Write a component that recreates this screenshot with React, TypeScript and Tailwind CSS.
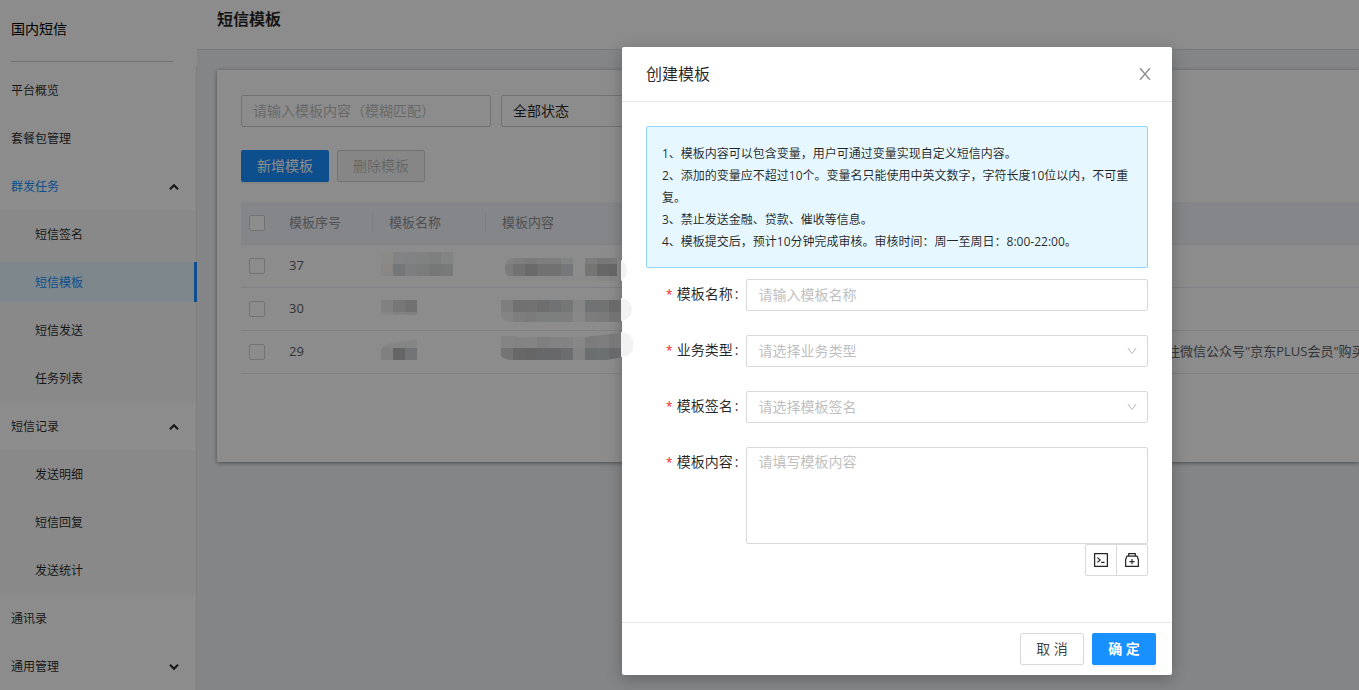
import { AiOutlineCode, AiOutlineDown, AiOutlineMedicineBox } from 'react-icons/ai'
import clsx from 'clsx'

type MenuEntry = {
  label: string
  active?: boolean
  open?: boolean
  arrow?: boolean
  children?: string[]
}

const menu: MenuEntry[] = [
  { label: '平台概览' },
  { label: '套餐包管理' },
  {
    label: '群发任务',
    active: true,
    open: true,
    arrow: true,
    children: ['短信签名', '短信模板', '短信发送', '任务列表'],
  },
  { label: '短信记录', open: true, arrow: true, children: ['发送明细', '短信回复', '发送统计'] },
  { label: '通讯录' },
  { label: '通用管理', arrow: true },
]

const rows = [
  { id: '37', note: '' },
  { id: '30', note: '' },
  { id: '29', note: '注微信公众号"京东PLUS会员"购买' },
]

const tips = [
  '1、模板内容可以包含变量，用户可通过变量实现自定义短信内容。',
  '2、添加的变量应不超过10个。变量名只能使用中英文数字，字符长度10位以内，不可重复。',
  '3、禁止发送金融、贷款、催收等信息。',
  '4、模板提交后，预计10分钟完成审核。审核时间：周一至周日：8:00-22:00。',
]

function MenuArrow({ open }: { open?: boolean }) {
  return (
    <svg
      className={clsx('h-[10px] w-[10px]', !open && 'rotate-180')}
      viewBox="0 0 10 10"
      fill="none"
      stroke="#262626"
      strokeWidth="2"
      aria-hidden="true"
    >
      <path d="M1 7.2 5 3.2 9 7.2" />
    </svg>
  )
}

function CloseIcon() {
  return (
    <svg className="h-4 w-4" viewBox="64 64 896 896" fill="currentColor" aria-hidden="true">
      <path d="M563.8 512l262.5-312.9c4.4-5.2.7-13.1-6.1-13.1h-79.8c-4.7 0-9.2 2.1-12.3 5.7L511.6 449.8 295.1 191.7c-3-3.6-7.5-5.7-12.3-5.7H203c-6.8 0-10.5 7.9-6.1 13.1L459.4 512 196.9 824.9A7.95 7.95 0 0 0 203 838h79.8c4.7 0 9.2-2.1 12.3-5.7l216.5-258.1 216.5 258.1c3 3.6 7.5 5.7 12.3 5.7h79.8c6.8 0 10.5-7.9 6.1-13.1L563.8 512z" />
    </svg>
  )
}

function Sidebar() {
  return (
    <aside className="flex w-[197px] shrink-0 flex-col bg-white shadow-[2px_0_6px_rgba(0,21,41,0.1)]">
      <h2 className="mr-6 ml-[11px] border-b border-[#d0d0d0] pt-[18px] pb-[21px] text-sm leading-[22px] text-black">
        国内短信
      </h2>
      <nav className="mt-1 border-r border-[#e8e8e8] text-xs text-black/85">
        {menu.map((entry) => (
          <div key={entry.label}>
            <a
              href="#"
              className={clsx(
                'flex h-12 items-center justify-between pt-0.5 pr-[17px] pl-[11px]',
                entry.active && 'text-[#1890ff]',
              )}
            >
              {entry.label}
              {entry.arrow && <MenuArrow open={entry.open} />}
            </a>
            {entry.children && (
              <div className="bg-[#fafafa]">
                {entry.children.map((child) => (
                  <div key={child} className="-mr-px py-1">
                    <a
                      href="#"
                      className={clsx(
                        'flex h-10 items-center pt-0.5 pl-[35px]',
                        child === '短信模板' && 'border-r-3 border-[#1890ff] bg-[#e6f7ff] text-[#1890ff]',
                      )}
                    >
                      {child}
                    </a>
                  </div>
                ))}
              </div>
            )}
          </div>
        ))}
      </nav>
    </aside>
  )
}

function Tick({ label }: { label: string }) {
  return (
    <input
      type="checkbox"
      aria-label={label}
      className="block h-4 w-4 appearance-none rounded-xs border border-[#d0d0d0] bg-white"
    />
  )
}

function TemplateTable() {
  return (
    <table className="mt-5 w-full table-fixed border-collapse text-left text-[13px] whitespace-nowrap">
      <colgroup>
        <col className="w-8" />
        <col className="w-[100px]" />
        <col className="w-[113px]" />
        <col className="w-[667px]" />
        <col />
      </colgroup>
      <thead>
        <tr className="h-[42px] border-b border-[#e8ebf2] bg-[#f2f5fa] text-[#909399]">
          <th className="pl-2">
            <Tick label="全选" />
          </th>
          {['模板序号', '模板名称', '模板内容'].map((title, i) => (
            <th key={title} className="p-0 font-normal">
              <div className={clsx('px-4 leading-[21px]', i < 2 && 'border-r border-[#e4e7ed]')}>{title}</div>
            </th>
          ))}
          <th />
        </tr>
      </thead>
      <tbody className="text-[#606266]">
        {rows.map((row) => (
          <tr key={row.id} className="h-[43px] border-b border-[#e8ebf0]">
            <td className="pl-2">
              <Tick label={row.id} />
            </td>
            <td className="px-4">{row.id}</td>
            <td />
            <td />
            <td className="overflow-hidden pl-[14px]">{row.note}</td>
          </tr>
        ))}
      </tbody>
    </table>
  )
}

function TemplatePage() {
  return (
    <main className="flex min-w-0 flex-1 flex-col bg-[#f0f2f5]">
      <header className="border-b border-[#d9dce2] bg-white px-5 pt-[7px] pb-[18px]">
        <h1 className="text-base leading-6 font-bold text-black/85">短信模板</h1>
      </header>
      <section className="mt-5 ml-5 bg-white pt-[25px] pb-[88px] pl-6 shadow-[0_1px_4px_rgba(0,0,0,0.45)]">
        <div className="flex gap-[10px]">
          <input
            aria-label="模板内容"
            placeholder="请输入模板内容（模糊匹配）"
            className="h-8 w-[250px] rounded-xs border border-[#d0d0d0] px-[11px] pb-0.5 text-sm placeholder:text-[#bfbfbf]"
          />
          <select
            aria-label="状态"
            className="h-8 w-[250px] appearance-none rounded-xs border border-[#d0d0d0] px-[11px] text-sm text-black/85"
          >
            <option>全部状态</option>
          </select>
        </div>
        <div className="mt-[23px] flex gap-2 text-sm">
          <button className="h-8 rounded-xs bg-[#1890ff] px-4 text-white shadow-[0_2px_0_rgba(0,0,0,0.045)]">
            新增模板
          </button>
          <button disabled className="h-8 rounded-xs border border-[#d0d0d0] bg-[#f5f5f5] px-[15px] text-black/25">
            删除模板
          </button>
        </div>
        <TemplateTable />
      </section>
    </main>
  )
}

const fieldClass = 'w-full rounded-xs border border-[#d9d9d9] bg-white px-[11px] text-sm placeholder:text-[#bfbfbf]'

function Field({ id, label, children }: { id: string; label: string; children: React.ReactNode }) {
  return (
    <div className="flex">
      <label htmlFor={id} className="w-1/5 shrink-0 pr-2 text-right text-sm leading-[30px] text-black/85">
        <span className="mr-1 text-xs text-[#f5222d]">*</span>
        {label}
        <span className="ml-0.5">:</span>
      </label>
      <div className="min-w-0 flex-1">{children}</div>
    </div>
  )
}

function SelectField({ id, placeholder }: { id: string; placeholder: string }) {
  return (
    <div className="relative">
      <select id={id} defaultValue="" className={clsx(fieldClass, 'h-8 appearance-none text-[#bfbfbf]')}>
        <option value="">{placeholder}</option>
      </select>
      <AiOutlineDown className="pointer-events-none absolute top-[10px] right-[10px] h-3 w-3 text-[#bfbfbf]" />
    </div>
  )
}

function CreateDialog() {
  return (
    <div
      role="dialog"
      aria-labelledby="dialog-title"
      className="w-[550px] rounded-xs bg-white shadow-[0_4px_16px_rgba(0,0,0,0.25)]"
    >
      <div className="flex items-center justify-between border-b border-[#e8e8e8] py-4 pr-[19px] pl-6">
        <h2 id="dialog-title" className="text-base leading-[22px] text-black/85">
          创建模板
        </h2>
        <button aria-label="关闭" className="text-black/45">
          <CloseIcon />
        </button>
      </div>
      <div className="px-6 pt-6 pb-[46px]">
        <div className="rounded-xs border border-[#91d5ff] bg-[#e6f7ff] px-[15px] pt-4 pb-[14px] text-xs leading-[22px] text-black/85">
          {tips.map((tip) => (
            <p key={tip}>{tip}</p>
          ))}
        </div>
        <form className="mt-[11px] flex flex-col gap-6">
          <Field id="name" label="模板名称">
            <input id="name" placeholder="请输入模板名称" className={clsx(fieldClass, 'h-8 pb-0.5')} />
          </Field>
          <Field id="biz" label="业务类型">
            <SelectField id="biz" placeholder="请选择业务类型" />
          </Field>
          <Field id="sign" label="模板签名">
            <SelectField id="sign" placeholder="请选择模板签名" />
          </Field>
          <Field id="content" label="模板内容">
            <textarea
              id="content"
              placeholder="请填写模板内容"
              className={clsx(fieldClass, 'block h-[97px] resize-none py-[3px] leading-[22px]')}
            />
            <div className="flex justify-end text-black/85">
              <button
                type="button"
                aria-label="插入变量"
                className="flex h-8 w-8 items-center justify-center rounded-l-xs border border-[#d9d9d9]"
              >
                <AiOutlineCode className="h-[18px] w-[18px]" />
              </button>
              <button
                type="button"
                aria-label="插入短链"
                className="-ml-px flex h-8 w-8 items-center justify-center rounded-r-xs border border-[#d9d9d9]"
              >
                <AiOutlineMedicineBox className="h-[18px] w-[18px]" />
              </button>
            </div>
          </Field>
        </form>
      </div>
      <div className="flex justify-end gap-2 border-t border-[#e8e8e8] px-4 py-[10px] text-sm">
        <button className="h-8 w-16 rounded-xs border border-[#d9d9d9] text-black/75 shadow-[0_2px_0_rgba(0,0,0,0.015)]">
          取 消
        </button>
        <button className="h-8 w-16 rounded-xs bg-[#1890ff] font-bold text-white shadow-[0_2px_0_rgba(0,0,0,0.045)]">
          确 定
        </button>
      </div>
    </div>
  )
}

// censored cells: [x, y, height, one colour per 12px block]
const blocks: [number, number, number, string[]][] = [
  [0, 2, 12, ['#8c8a87', '#818385', '#818283', '#808181', '#7e7f7f', '#838585']],
  [0, 14, 12, ['#898683', '#747779', '#7c7e80', '#797c7b', '#767777', '#777a79']],
  [0, 50, 12, ['#818181', '#777777', '#717171']],
  [0, 62, 3, ['#868686', '#828282', '#7f7f7f']],
  [0, 98, 12, ['#808080', '#656565', '#727477']],
]

const contentBlocks: { clip: string; cells: [number, number, string[]][] }[] = [
  {
    clip: 'M132 8H236V31H132Q124 26 124 18Q124 10 132 8Z',
    cells: [
      [8, 6, ['#828282', '#7e7e7e', '#7a7a7a', '#7e7e7e', '#7e7e7e', '#828383', 'none', '#7d7d7c', '#787878', '#787878']],
      [14, 12, ['#7b7b7b', '#727272', '#696969', '#717171', '#717171', '#75777a', 'none', '#757573', '#676767', '#646464']],
      [26, 5, ['#8a8a8a', '#8a8a8a', '#8a8a8a', '#8a8a8a', '#8a8a8a', '#8a8a8a', '#8a8a8a', '#8a8a8a', '#878787', '#838383']],
    ],
  },
  {
    clip: 'M120 50H246V72H128Q120 71 120 66Z',
    cells: [
      [50, 12, ['#7e7e7e', '#717171', '#727272', '#6e6e6e', '#707274', '#757676', '#868686', '#707373', '#717272', '#6a6a6a']],
      [62, 10, ['#848484', '#7e7e7e', '#7b7b7b', '#7d7e7e', '#7d7e7e', '#7e7e7e', '#888888', '#7d7d7d', '#7a7a7a', '#737373']],
    ],
  },
  {
    clip: 'M120 86L134 86 140 87 204 87 246 82V106L226 110H130Q122 109 120 106Z',
    cells: [
      [82, 16, ['#848484', '#838383', '#848484', '#7f7f7f', '#828282', '#838383', '#878787', '#7c7c7c', '#7e7e7e', '#787878']],
      [98, 12, ['#747474', '#686868', '#666666', '#676869', '#68686a', '#6b6d6e', '#838383', '#6c6f70', '#6d7071', '#67696a']],
    ],
  },
]

function CensoredText() {
  return (
    <svg
      className="pointer-events-none absolute top-[250px] left-[381px] h-[112px] w-[256px]"
      viewBox="0 0 256 112"
      shapeRendering="crispEdges"
      aria-hidden="true"
    >
      <clipPath id="names">
        <path d="M0 0H80V26H0ZM0 48H36V66H14L0 64ZM0 110V100Q2 94 10 93L36 90V110Z" />
      </clipPath>
      <g clipPath="url(#names)">
        <path d="M0 90H36V98H0Z" fill="#858585" />
        {blocks.map(([x, y, h, colors]) =>
          colors.map((fill, i) => <rect key={`${y}-${i}`} x={x + i * 12} y={y} width="12" height={h} fill={fill} />),
        )}
      </g>
      {contentBlocks.map(({ clip, cells }, n) => (
        <g key={n} clipPath={`url(#content-${n})`}>
          <clipPath id={`content-${n}`}>
            <path d={clip} />
          </clipPath>
          {cells.map(([y, h, colors]) =>
            colors.map((fill, i) => <rect key={`${y}-${i}`} x={120 + i * 12} y={y} width="12" height={h} fill={fill} />),
          )}
        </g>
      ))}
      <g fill="#f2f2f2" shapeRendering="auto">
        <path d="M240 10Q246 13 246 20Q246 28 240 31Z" />
        <path d="M240 48Q251 50 251 59Q251 69 240 71Z" />
        <path d="M240 82Q252 84 252 91V99Q250 106 240 107Z" />
      </g>
    </svg>
  )
}

export default function App() {
  return (
    <div className="relative flex h-screen overflow-hidden font-['Open_Sans','Noto_Sans_CJK_SC',sans-serif]">
      <Sidebar />
      <TemplatePage />
      <div className="absolute inset-0 flex items-start bg-black/45 pt-[47px] pl-[622px]">
        <CreateDialog />
      </div>
      <CensoredText />
    </div>
  )
}
